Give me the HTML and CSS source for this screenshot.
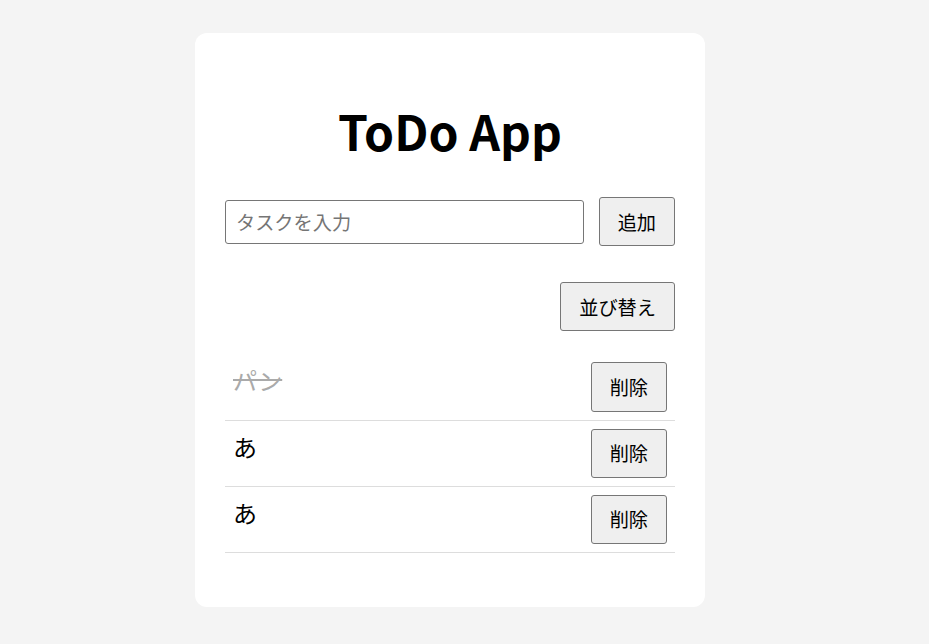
FILE: index.html
```html
<!DOCTYPE html>
<html lang="ja">
<head>
    <meta charset="UTF-8">
    <meta name="viewport" content="width=device-width, initial-scale=1.0">
    <title>ToDo App</title>
    <link rel="stylesheet" href="styles.css">
</head>
<body>
    <div class="page">
        <div class="todo-card">
            <h1 class="todo-title">ToDo App</h1>

            <div class="add-row">
                <input type="text" class="task-input" placeholder="タスクを入力">
                <button class="plain-button">追加</button>
            </div>

            <div class="sort-row">
                <button class="plain-button">並び替え</button>
            </div>

            <ul class="task-list">
                <li class="task-item done">
                    <span class="task-text">パン</span>
                    <button class="plain-button">削除</button>
                </li>
                <li class="task-item">
                    <span class="task-text">あ</span>
                    <button class="plain-button">削除</button>
                </li>
                <li class="task-item">
                    <span class="task-text">あ</span>
                    <button class="plain-button">削除</button>
                </li>
            </ul>
        </div>
    </div>
</body>
</html>
```

FILE: styles.css
```css
:root {
    --bg: #f4f4f4;
    --card: #ffffff;
    --line: #dddddd;
    --font: 'Noto Sans CJK JP', 'Noto Sans', sans-serif;
}

* {
    box-sizing: border-box;
}

body {
    background: var(--bg);
    color: #000;
    font-family: var(--font);
    margin: 0;
    padding: 33px 0;
}

.page {
    width: 900px;
}

.todo-card {
    width: 510px;
    margin: 0 auto;
    padding: 30px;
    background: var(--card);
    border-radius: 12px;
}

.todo-title {
    font-size: 3rem;
    font-weight: 700;
    text-align: center;
    margin: 32px 0;
}

.add-row {
    display: flex;
    align-items: center;
    gap: 15px;
}

.task-input {
    flex: 1;
    min-width: 0;
    font-family: var(--font);
    font-size: 1.2rem;
    padding: 7px 10px;
    border: 1px solid #767676;
    border-radius: 3px;
}

.task-input::placeholder {
    color: #757575;
}

.plain-button {
    font-family: var(--font);
    font-size: 1.2rem;
    padding: 0.5em 18px;
    background: #efefef;
    border: 1px solid #767676;
    border-radius: 3px;
    color: #000;
    cursor: pointer;
}

.sort-row {
    display: flex;
    justify-content: flex-end;
    margin-top: 36px;
}

.task-list {
    list-style: none;
    padding: 0;
    margin: 23px 0 24px;
}

.task-item {
    display: flex;
    justify-content: space-between;
    align-items: flex-start;
    padding: 8px;
    border-bottom: 1px solid var(--line);
}

.task-text {
    font-size: 1.5rem;
}

.task-item.done .task-text {
    color: #aaa;
    text-decoration: line-through;
}
```
